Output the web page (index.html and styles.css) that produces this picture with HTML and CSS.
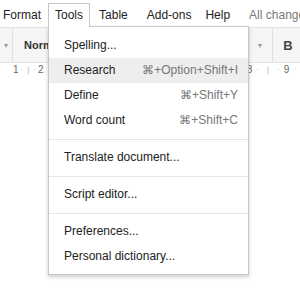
FILE: index.html
```html
<!DOCTYPE html>
<html lang="en">
<head>
    <meta charset="UTF-8">
    <title>Tools menu</title>
    <link rel="stylesheet" href="styles.css">
</head>
<body>
    <div class="menubar">
        <div class="menu-item">Format</div>
        <div class="menu-item active">Tools</div>
        <div class="menu-item table">Table</div>
        <div class="menu-item addons">Add-ons</div>
        <div class="menu-item">Help</div>
        <div class="status">All changes saved in Drive</div>
    </div>

    <div class="toolbar">
        <div class="tool arrow">&#9662;</div>
        <div class="tool-sep"></div>
        <div class="tool style-name">Norm</div>
        <div class="spacer"></div>
        <div class="tool arrow right-arrow">&#9662;</div>
        <div class="tool-sep"></div>
        <div class="tool bold">B</div>
    </div>

    <div class="ruler">
        <span class="num">1</span>
        <span class="tick">&middot;</span>
        <span class="tick">|</span>
        <span class="tick">&middot;</span>
        <span class="num">2</span>
        <div class="spacer"></div>
        <span class="num">8</span>
        <span class="tick wide">&middot;</span>
        <span class="tick wide">|</span>
        <span class="tick wide">&middot;</span>
        <span class="num">9</span>
        <span class="tick wide">&middot;</span>
    </div>

    <div class="dropdown">
        <div class="drop-item">Spelling...</div>
        <div class="drop-item hover">Research <span class="shortcut">&#8984;+Option+Shift+I</span></div>
        <div class="drop-item">Define <span class="shortcut">&#8984;+Shift+Y</span></div>
        <div class="drop-item">Word count <span class="shortcut">&#8984;+Shift+C</span></div>
        <div class="drop-sep"></div>
        <div class="drop-item">Translate document...</div>
        <div class="drop-sep"></div>
        <div class="drop-item">Script editor...</div>
        <div class="drop-sep"></div>
        <div class="drop-item">Preferences...</div>
        <div class="drop-item">Personal dictionary...</div>
    </div>
</body>
</html>
```

FILE: styles.css
```css
body {
    margin: 0;
    width: 300px;
    height: 295px;
    overflow: hidden;
    background: #fff;
    font-family: "Liberation Sans", Arial, sans-serif;
    white-space: nowrap;
    position: relative;
}

.menubar {
    display: flex;
    height: 27px;
    margin-left: -4px;
    overflow: hidden;
    font-size: 12px;
    color: #222;
}

.menu-item {
    margin-top: 3px;
    height: 23px;
    line-height: 23px;
    padding: 0 6px;
    border: 1px solid transparent;
    border-bottom: none;
}

.menu-item.active {
    background: #fff;
    border-color: #c6c6c6;
    position: relative;
    z-index: 3;
}

.table {
    margin-left: 2px;
}

.addons {
    margin-left: 5px;
}

.status {
    margin-top: 4px;
    margin-left: 12px;
    line-height: 23px;
    color: #777;
    overflow: hidden;
}

.toolbar {
    display: flex;
    align-items: center;
    height: 34px;
    background: #f5f5f5;
    border-top: 1px solid #e2e2e2;
    border-bottom: 1px solid #e2e2e2;
}

.tool {
    font-size: 11px;
    color: #333;
}

.arrow {
    font-size: 8px;
    color: #999;
    width: 12px;
    text-align: center;
}

.right-arrow {
    width: 24px;
}

.tool-sep {
    align-self: stretch;
    width: 1px;
    background: #e0e0e0;
}

.style-name {
    margin-left: 11px;
    font-weight: bold;
}

.bold {
    width: 24px;
    padding-left: 3px;
    text-align: center;
    font-size: 13px;
    font-weight: bold;
    color: #444;
}

.spacer {
    flex: 1;
}

.ruler {
    display: flex;
    align-items: center;
    height: 13px;
    padding-left: 13px;
    font-size: 10px;
    color: #666;
}

.ruler .tick {
    font-size: 8px;
    color: #aaa;
    margin: 0 2px;
}

.ruler .tick.wide {
    margin: 0 4px;
}

.dropdown {
    position: absolute;
    left: 48px;
    top: 26px;
    width: 199px;
    padding: 6px 0 5px;
    background: #fff;
    border: 1px solid #c6c6c6;
    box-shadow: 0 2px 4px rgba(0, 0, 0, 0.2);
    z-index: 2;
    font-size: 12px;
    color: #222;
}

.drop-item {
    display: flex;
    justify-content: space-between;
    height: 25px;
    line-height: 25px;
    padding: 0 10px 0 15px;
}

.drop-item.hover {
    background: #eeeeee;
}

.shortcut {
    color: #777;
}

.drop-sep {
    height: 1px;
    margin: 6px 0 5px;
    background: #e5e5e5;
}
```
